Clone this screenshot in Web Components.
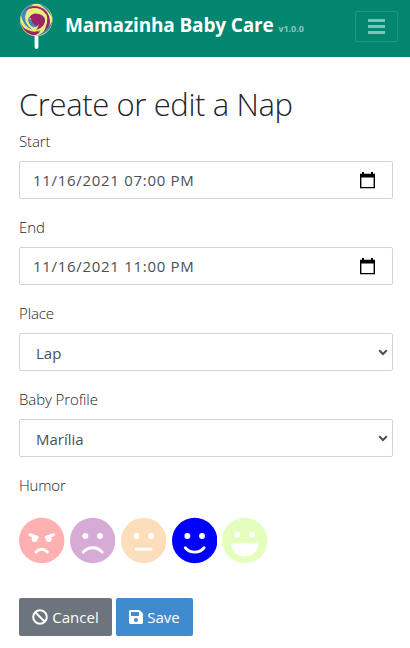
<!DOCTYPE html>
<html lang="en">
<head>
<meta charset="utf-8">
<title>Mamazinha Baby Care</title>
<style>
body{margin:0;background:#fff;color:#212529;font-family:"Open Sans","Noto Sans",sans-serif;font-size:15px}
</style>
</head>
<body>
<nap-page></nap-page>
<script>
function define(name, html, setup){
  const t=document.createElement('template');t.innerHTML=html;
  customElements.define(name,class extends HTMLElement{
    connectedCallback(){
      if(this.shadowRoot)return;
      const r=this.attachShadow({mode:'open'});
      r.append(t.content.cloneNode(true));
      if(setup)setup(this,r);
    }
  });
}

define('lollipop-logo',`<style>:host{display:block;width:36px;height:48px}svg{display:block}</style>
<svg width="36" height="48" viewBox="0 0 36 48">
<path d="M17.5 34v12" stroke="#fff" stroke-width="3.8" stroke-linecap="round"/>
<circle cx="17.3" cy="19" r="16.2" fill="#e9ed7b"/>
<path d="M2 14Q5 5 15 3Q7 8 6 16Q6 24 14 29Q4 26 2 14Z" fill="#4387bd"/>
<path d="M1.500 20Q3 27 9 29Q17 33 22 28Q20 35 13 34Q3 31 1.500 20Z" fill="#982566"/>
<path d="M20 3Q30 5 33 16Q28 8 20 3Z" fill="#4387bd"/>
<path d="M6 10Q12 3 21 6Q30 9 31 20Q31 28 24 32Q29 24 27 16Q23 7 15 7Q10 7 6 10Z" fill="#982566"/>
<path d="M9 10Q14 6 21 8Q30 12 28 22Q25 29 19 31Q25 24 24 18Q20 9 9 10Z" fill="#e9ed7b"/>
<path d="M33.400 20Q32 32 18 35Q29 29 33.400 20Z" fill="#4387bd"/>
<path d="M9 17Q9 24 14 26Q18 27 19 24Q14 24 12 18Z" fill="#4387bd"/>
<path d="M10 17Q13 11 20 13Q27 15 26 21Q24 27 17 29Q21 24 19 21Q15 17 10 17Z" fill="#982566"/>
<path d="M12 17Q18 16 20 20Q21 23 18 25Q12 23 12 17Z" fill="#982566"/>
</svg>`);

define('app-bar',`<style>
:host{display:flex;align-items:flex-start;height:57px;background:#038670;color:#fff;padding:0 12px 0 19px;box-sizing:border-box}
lollipop-logo{margin-top:1px;flex:none}
.brand{flex:1;padding:11px 0 0 10px;line-height:28px;white-space:nowrap;font-weight:700;font-size:19px;letter-spacing:-.15px}
small{font-size:9px;letter-spacing:-.05px;color:#8cc8bd}
.toggle{display:grid;place-items:center;width:43px;height:31px;box-sizing:border-box;margin-top:11px;border:1px solid #219582;border-radius:2px}
svg{display:block}
</style><lollipop-logo></lollipop-logo><div class="brand"><span>Mamazinha Baby Care</span> <small>v1.0.0</small></div>
<div class="toggle"><svg width="17" height="17" viewBox="0 0 17 17"><path d="M0 2.5h17M0 8.5h17M0 14.5h17" stroke="#81c3b8" stroke-width="2.8"/></svg></div>`);

define('form-field',`<style>
:host{display:block;height:86px}
.label{display:block;height:24px;line-height:24px;margin-bottom:8px;font-weight:300;font-size:15px}
.label span{letter-spacing:-.1px}
.box{display:flex;align-items:center;justify-content:space-between;box-sizing:border-box;height:38px;border:1px solid #ced4da;border-radius:2px;color:#495057;font-size:15px;padding:0 17px 0 13px;background:#fff}
.box span{letter-spacing:.7px;white-space:pre}
:host([kind=select]) .box{padding:0 4px 0 16px}
:host([kind=select]) .box span{letter-spacing:0;padding-top:2px}
svg{display:block}.arrow{display:none}
:host([kind=select]) .arrow{display:block}
:host([kind=select]) .cal{display:none}
</style><div class="label"><span></span></div><div class="box"><span><slot></slot></span>
<svg class="cal" width="15" height="17" viewBox="0 0 15 17"><path d="M.7 2.5h13.6v13.1H.7z" fill="none" stroke="#000" stroke-width="1.4"/><path d="M0 2h15v3.5H0zM2 0h2v3H2zM11 0h2v3h-2z"/></svg>
<svg class="arrow" width="10" height="7" viewBox="0 0 10 7"><path d="M1.2 1.3 5 5l3.8-3.7" fill="none" stroke="#495057" stroke-width="2"/></svg></div>`,
(h,r)=>{r.querySelector('.label span').textContent=h.getAttribute('label')});

const eyes=y=>`<circle cx="168" cy="${y}" r="32"/><circle cx="328" cy="${y}" r="32"/>`;
const line=d=>`<path d="${d}" fill="none" stroke="#fff" stroke-width="32" stroke-linecap="round"/>`;
const moods={
  angry:['#ffb0b0',`<circle cx="170" cy="240" r="32"/><circle cx="326" cy="240" r="32"/>`+line('M119 194l80 25M377 194l-80 25')+line('M186 382q62-62 124 0')],
  sad:['#d6acd6',eyes(208)+line('M145 384Q187 336 248 336T351 384')],
  neutral:['#fcdebb',eyes(208)+line('M168 352h160')],
  happy:['#0000ff',eyes(208)+line('M145 336Q187 384 248 384T351 336')],
  laughing:['#e4ffbd',eyes(192)+'<path d="M113 288h270q15 0 13 16c-9 74-70 128-143 128h-10c-73 0-134-54-143-128q-2-16 13-16z"/>']
};
define('mood-face',`<style>:host{display:grid;place-items:center;width:46.5px;height:48px}svg{display:block}</style><svg width="45.4" height="46.9" viewBox="0 0 496 512"><circle cx="248" cy="256" r="248"/><g fill="#fff"></g></svg>`,
(h,r)=>{const m=moods[h.getAttribute('mood')];r.querySelector('circle').setAttribute('fill',m[0]);r.querySelector('g').innerHTML=m[1]});

define('action-button',`<style>
:host{display:flex;align-items:center;justify-content:center;gap:4px;box-sizing:border-box;height:38px;border-radius:2px;color:#fff;font-size:15px;background:var(--bg)}
::slotted(svg){display:block}
</style><slot name="icon"></slot><span><slot></slot></span>`);

define('nap-page',`<style>
:host{display:block}
main{padding:28px 17px 0 19px}
h1{margin:0 0 6px;font-size:31px;line-height:38px;font-weight:300;letter-spacing:-.38px;white-space:nowrap}
.humor{font-weight:300;line-height:24px;height:24px;letter-spacing:-.2px}
.faces{display:flex;gap:4.3px;margin:19.500px 0 0 -.4px}
.actions{display:flex;gap:4px;margin-top:33.500px}
</style><app-bar></app-bar><main>
<h1>Create or edit a Nap</h1>
<form-field label="Start">11/16/2021 07:00 PM</form-field>
<form-field label="End">11/16/2021 11:00 PM</form-field>
<form-field label="Place" kind="select">Lap</form-field>
<form-field label="Baby Profile" kind="select">Marília</form-field>
<div class="humor">Humor</div>
<div class="faces"><mood-face mood="angry"></mood-face><mood-face mood="sad"></mood-face><mood-face mood="neutral"></mood-face><mood-face mood="happy"></mood-face><mood-face mood="laughing"></mood-face></div>
<div class="actions">
<action-button style="--bg:#6c757d;width:93px"><svg slot="icon" width="16" height="16" viewBox="0 0 16 16"><g fill="none" stroke="#fff" stroke-width="2"><circle cx="8" cy="8" r="6.8"/><path d="M3.2 3.2l9.6 9.6"/></g></svg>Cancel</action-button>
<action-button style="--bg:#408bce;width:77px"><svg slot="icon" width="14" height="16" viewBox="0 0 448 512"><path fill="#fff" fill-rule="evenodd" d="M433.9 129.9l-83.9-83.9A48 48 0 0 0 316.1 32H48C21.5 32 0 53.5 0 80v352c0 26.500 21.500 48 48 48h352c26.500 0 48-21.500 48-48V163.900a48 48 0 0 0-14.100-34zM224 416c-35.300 0-64-28.700-64-64s28.700-64 64-64 64 28.700 64 64-28.700 64-64 64zm96-304.500V212c0 6.600-5.400 12-12 12H76c-6.600 0-12-5.400-12-12V108c0-6.600 5.400-12 12-12h228.500c3.200 0 6.200 1.300 8.500 3.500l3.500 3.500a12 12 0 0 1 3.500 8.500z"/></svg>Save</action-button>
</div></main>`);
</script>
</body>
</html>
